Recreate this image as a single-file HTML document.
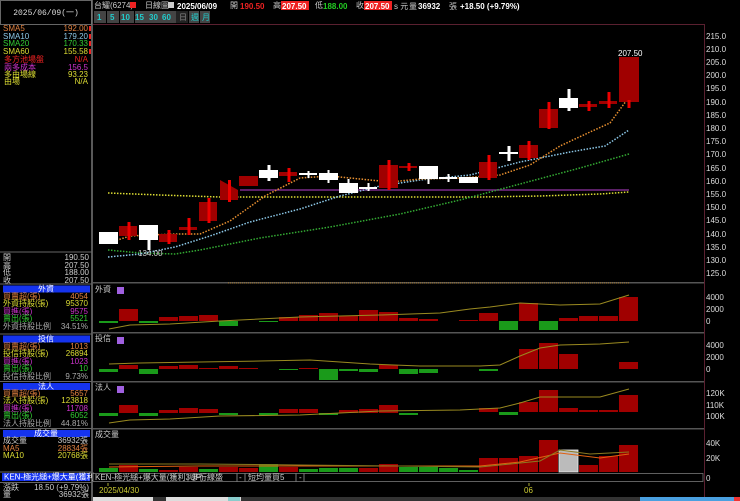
<!DOCTYPE html>
<html><head><meta charset="utf-8"><style>
html,body{margin:0;padding:0;background:#000;width:740px;height:501px;overflow:hidden}
svg{display:block}
text{font-family:"Liberation Sans","Noto Sans CJK TC",sans-serif;font-size:8px}
.m{font-family:"Liberation Mono","Noto Sans CJK TC",monospace;font-size:8px}
</style></head><body>
<svg width="740" height="501" viewBox="0 0 740 501" xmlns="http://www.w3.org/2000/svg">
<rect width="740" height="501" fill="#000"/>
<!-- left panel frame -->
<rect x="0.5" y="0.5" width="91" height="24" fill="#000" stroke="#666"/>
<text x="46" y="15" fill="#ddd" text-anchor="middle" class="m" font-size="7">2025/06/09(一)</text>
<line x1="92" y1="0" x2="92" y2="501" stroke="#777" stroke-width="1.5"/>
<g class="m" font-size="7">
<text x="3" y="31" fill="#e08040">SMA5</text><text x="88" y="31" fill="#e08040" text-anchor="end">192.00</text>
<text x="3" y="39" fill="#8cc8e8">SMA10</text><text x="88" y="39" fill="#8cc8e8" text-anchor="end">179.20</text>
<text x="3" y="46" fill="#3c3">SMA20</text><text x="88" y="46" fill="#3c3" text-anchor="end">170.33</text>
<text x="3" y="54" fill="#dd3">SMA60</text><text x="88" y="54" fill="#dd3" text-anchor="end">155.58</text>
<text x="4" y="62" fill="#e22">多方池場盤</text><text x="88" y="62" fill="#e22" text-anchor="end">N/A</text>
<text x="4" y="70" fill="#c3c">兩多成本</text><text x="88" y="70" fill="#c3c" text-anchor="end">156.5</text>
<text x="4" y="77" fill="#dd3">多由場線</text><text x="88" y="77" fill="#dd3" text-anchor="end">93.23</text>
<text x="4" y="84" fill="#dd3">由場</text><text x="88" y="84" fill="#dd3" text-anchor="end">N/A</text>
</g>
<g fill="#e22"><rect x="89" y="26" width="2" height="5"/><rect x="89" y="34" width="2" height="5"/><rect x="89" y="41" width="2" height="5"/><rect x="89" y="49" width="2" height="5"/></g>
<line x1="0" y1="252" x2="92" y2="252" stroke="#666"/>
<g class="m" font-size="7" fill="#ccc">
<text x="3" y="260">開</text><text x="89" y="260" text-anchor="end">190.50</text>
<text x="3" y="268">高</text><text x="89" y="268" text-anchor="end">207.50</text>
<text x="3" y="275">低</text><text x="89" y="275" text-anchor="end">188.00</text>
<text x="3" y="283">收</text><text x="89" y="283" text-anchor="end">207.50</text>
</g>
<!-- 外資 -->
<line x1="0" y1="284" x2="92" y2="284" stroke="#666"/>
<rect x="3" y="285.5" width="87" height="7" fill="#1533ee"/>
<text x="46" y="291.5" fill="#fff" text-anchor="middle" font-size="7">外資</text>
<g class="m" font-size="7">
<text x="3" y="299" fill="#e08040">買賣超(張)</text><text x="88" y="299" fill="#e08040" text-anchor="end">4054</text>
<text x="3" y="306" fill="#dd3">外資持股(張)</text><text x="88" y="306" fill="#dd3" text-anchor="end">95370</text>
<text x="3" y="314" fill="#c3c">買進(張)</text><text x="88" y="314" fill="#c3c" text-anchor="end">9575</text>
<text x="3" y="321" fill="#3c3">賣出(張)</text><text x="88" y="321" fill="#3c3" text-anchor="end">5521</text>
<text x="3" y="329" fill="#aaa">外資持股比例</text><text x="88" y="329" fill="#aaa" text-anchor="end">34.51%</text>
</g>
<line x1="0" y1="334" x2="92" y2="334" stroke="#666"/>
<rect x="3" y="335.5" width="87" height="7" fill="#1533ee"/>
<text x="46" y="341.5" fill="#fff" text-anchor="middle" font-size="7">投信</text>
<g class="m" font-size="7">
<text x="3" y="349" fill="#e08040">買賣超(張)</text><text x="88" y="349" fill="#e08040" text-anchor="end">1013</text>
<text x="3" y="356" fill="#dd3">投信持股(張)</text><text x="88" y="356" fill="#dd3" text-anchor="end">26894</text>
<text x="3" y="364" fill="#c3c">買進(張)</text><text x="88" y="364" fill="#c3c" text-anchor="end">1023</text>
<text x="3" y="371" fill="#3c3">賣出(張)</text><text x="88" y="371" fill="#3c3" text-anchor="end">10</text>
<text x="3" y="379" fill="#aaa">投信持股比例</text><text x="88" y="379" fill="#aaa" text-anchor="end">9.73%</text>
</g>
<line x1="0" y1="381.5" x2="92" y2="381.5" stroke="#666"/>
<rect x="3" y="383" width="87" height="7" fill="#1533ee"/>
<text x="46" y="389" fill="#fff" text-anchor="middle" font-size="7">法人</text>
<g class="m" font-size="7">
<text x="3" y="396" fill="#e08040">買賣超(張)</text><text x="88" y="396" fill="#e08040" text-anchor="end">5657</text>
<text x="3" y="403" fill="#dd3">法人持股(張)</text><text x="88" y="403" fill="#dd3" text-anchor="end">123818</text>
<text x="3" y="411" fill="#c3c">買進(張)</text><text x="88" y="411" fill="#c3c" text-anchor="end">11708</text>
<text x="3" y="418" fill="#3c3">賣出(張)</text><text x="88" y="418" fill="#3c3" text-anchor="end">6052</text>
<text x="3" y="426" fill="#aaa">法人持股比例</text><text x="88" y="426" fill="#aaa" text-anchor="end">44.81%</text>
</g>
<line x1="0" y1="428.5" x2="92" y2="428.5" stroke="#666"/>
<rect x="3" y="430" width="87" height="7" fill="#1533ee"/>
<text x="46" y="436" fill="#fff" text-anchor="middle" font-size="7">成交量</text>
<g class="m" font-size="7">
<text x="3" y="443" fill="#ccc">成交量</text><text x="88" y="443" fill="#ccc" text-anchor="end">36932張</text>
<text x="3" y="451" fill="#e08040">MA5</text><text x="88" y="451" fill="#e08040" text-anchor="end">28834張</text>
<text x="3" y="458" fill="#dd3">MA10</text><text x="88" y="458" fill="#dd3" text-anchor="end">20768張</text>
</g>
<line x1="0" y1="472" x2="92" y2="472" stroke="#666"/>
<rect x="2" y="473" width="88" height="8" fill="#1533ee"/>
<text x="4" y="479.5" fill="#fff" font-size="6.5">KEN-極光縋+爆大量(獲利3UP)</text>
<line x1="0" y1="482.5" x2="92" y2="482.5" stroke="#666"/>
<g class="m" font-size="7" fill="#ccc">
<text x="3" y="490">漲跌</text><text x="89" y="490" text-anchor="end">18.50 (+9.79%)</text>
<text x="3" y="497">量</text><text x="89" y="497" text-anchor="end">36932張</text>
</g>

<!-- top toolbar -->
<text x="94" y="8" fill="#ccc" font-size="6.5">台耀(6274)</text>
<rect x="130" y="2" width="6" height="6" fill="#e22"/>
<text x="145" y="8" fill="#ccc" font-size="6.5">日線圖</text>
<rect x="168" y="2" width="6" height="6" fill="#ccc"/>
<text x="177" y="9" fill="#fff" font-size="9" font-weight="bold">2025/06/09</text>
<text x="230" y="8" fill="#ccc" font-size="7">開</text>
<text x="240" y="9" fill="#e22" font-size="9" font-weight="bold">190.50</text>
<text x="273" y="8" fill="#ccc" font-size="7">高</text>
<rect x="281" y="1" width="28" height="9" fill="#e22"/>
<text x="282" y="9" fill="#fff" font-size="9" font-weight="bold">207.50</text>
<text x="315" y="8" fill="#ccc" font-size="7">低</text>
<text x="323" y="9" fill="#2c2" font-size="9" font-weight="bold">188.00</text>
<text x="356" y="8" fill="#ccc" font-size="7">收</text>
<rect x="364" y="1" width="28" height="9" fill="#e22"/>
<text x="365" y="9" fill="#fff" font-size="9" font-weight="bold">207.50</text>
<text x="394" y="9" fill="#ccc" font-size="7">s 元</text>
<text x="409" y="9" fill="#ccc" font-size="7">量</text>
<text x="418" y="9" fill="#fff" font-size="9" font-weight="bold">36932</text>
<text x="449" y="9" fill="#ccc" font-size="7">張</text>
<text x="460" y="9" fill="#fff" font-size="9" font-weight="bold">+18.50 (+9.79%)</text>
<g font-size="9" font-weight="bold" fill="#2cc">
<rect x="94" y="11" width="12" height="12" fill="#444"/><text x="97" y="20">1</text>
<rect x="107" y="11" width="12" height="12" fill="#444"/><text x="110" y="20">5</text>
<rect x="120" y="11" width="14" height="12" fill="#444"/><text x="121" y="20">10</text>
<rect x="135" y="11" width="14" height="12" fill="#444"/><text x="135" y="20">15</text>
<rect x="149" y="11" width="14" height="12" fill="#444"/><text x="149" y="20">30</text>
<rect x="162" y="11" width="14" height="12" fill="#444"/><text x="162" y="20">60</text>
<rect x="176" y="11" width="12" height="12" fill="#222"/><text x="179" y="20" fill="#888" font-weight="normal" font-size="6">日</text>
<rect x="189" y="11" width="10" height="12" fill="#444"/><text x="191" y="20" font-weight="normal" font-size="6">週</text>
<rect x="200" y="11" width="10" height="12" fill="#444"/><text x="202" y="20" font-weight="normal" font-size="6">月</text>
</g>

<!-- main chart frame -->
<line x1="93" y1="24.5" x2="705" y2="24.5" stroke="#5a2030"/>
<line x1="704.5" y1="24" x2="704.5" y2="501" stroke="#5a2030"/>
<g fill="#ddd" font-size="8">
<text x="706" y="39">215.0</text><text x="706" y="52">210.0</text><text x="706" y="65">205.0</text><text x="706" y="78">200.0</text><text x="706" y="91">195.0</text><text x="706" y="105">190.0</text><text x="706" y="118">185.0</text><text x="706" y="131">180.0</text><text x="706" y="144">175.0</text><text x="706" y="157">170.0</text><text x="706" y="171">165.0</text><text x="706" y="184">160.0</text><text x="706" y="197">155.0</text><text x="706" y="210">150.0</text><text x="706" y="223">145.0</text><text x="706" y="237">140.0</text><text x="706" y="250">135.0</text><text x="706" y="263">130.0</text><text x="706" y="276">125.0</text>
</g>
<!-- MA lines -->
<line x1="240" y1="190" x2="629" y2="190" stroke="#7a2a8a" stroke-width="1.5"/>
<polyline fill="none" stroke="#dd3" stroke-width="1.5" stroke-dasharray="1.5 1.5" points="108,193 160,195 220,197 300,197 400,197 480,197 540,196 600,194 629,192"/>
<polyline fill="none" stroke="#3a3" stroke-width="1.5" stroke-dasharray="1.5 1.5" points="108,250 140,253 175,254 200,250 260,238 330,227 400,214 460,200 520,184 580,168 629,154"/>
<polyline fill="none" stroke="#8cc8e8" stroke-width="1.5" stroke-dasharray="1.5 1.5" points="108,257 140,254 175,247 210,236 250,222 300,209 340,196 380,186 420,180 470,175 520,162 570,152 605,146 629,130"/>
<polyline fill="none" stroke="#e89030" stroke-width="1.5" stroke-dasharray="1.5 1.5" points="108,243 130,236 150,235 175,234 200,234 230,221 265,196 300,178 330,176 360,179 390,182 420,179 460,178 500,175 530,165 560,146 590,132 610,123 629,97"/>
<!-- candles -->
<g fill="#a00000">
<rect x="119" y="226" width="18" height="10"/><rect x="127.5" y="222" width="3" height="18" fill="#e00"/>
<rect x="159" y="234" width="18" height="8"/><rect x="167.5" y="230" width="3" height="14" fill="#e00"/>
<rect x="179" y="227" width="18" height="3"/><rect x="187.5" y="218" width="3" height="17" fill="#e00"/>
<rect x="199" y="202" width="18" height="19"/><rect x="207.5" y="198" width="3" height="25" fill="#e00"/>
<path d="M220,180 L238,190 L238,200 L220,200 Z"/><rect x="228" y="180" width="3" height="22" fill="#e00"/>
<rect x="239" y="176" width="19" height="10"/>
<rect x="279" y="172" width="18" height="4"/><rect x="287.5" y="168" width="3" height="14" fill="#e00"/>
<rect x="379" y="165" width="19" height="23"/><rect x="387.5" y="160" width="3" height="30" fill="#e00"/>
<rect x="399" y="166" width="18" height="2"/><rect x="407.5" y="163" width="3" height="8" fill="#e00"/>
<rect x="479" y="162" width="18" height="16"/><rect x="487.5" y="155" width="3" height="25" fill="#e00"/>
<rect x="519" y="145" width="19" height="13"/><rect x="527.5" y="141" width="3" height="19" fill="#e00"/>
<rect x="539" y="109" width="19" height="19"/><rect x="547.5" y="102" width="3" height="27" fill="#e00"/>
<rect x="579" y="104" width="18" height="3"/><rect x="587.5" y="101" width="3" height="10" fill="#e00"/>
<rect x="599" y="101" width="18" height="3"/><rect x="607.5" y="92" width="3" height="16" fill="#e00"/>
<rect x="619" y="57" width="20" height="45"/><rect x="627.5" y="100" width="3" height="8" fill="#e00"/>
</g>
<g fill="#fff">
<rect x="99" y="232" width="19" height="12"/>
<rect x="139" y="225" width="19" height="15"/><rect x="147.5" y="240" width="3" height="10"/>
<rect x="259" y="170" width="19" height="8"/><rect x="267.5" y="165" width="3" height="16"/>
<rect x="299" y="173" width="18" height="2"/><rect x="307.5" y="171" width="2" height="7"/>
<rect x="319" y="173" width="19" height="7"/><rect x="327.5" y="170" width="2" height="13"/>
<rect x="339" y="183" width="19" height="10"/><rect x="347.5" y="179" width="2" height="5"/>
<rect x="359" y="187" width="18" height="2"/><rect x="367.5" y="183" width="2" height="8"/>
<rect x="419" y="166" width="19" height="13"/><rect x="427.5" y="176" width="2" height="8"/>
<rect x="439" y="177" width="18" height="2"/><rect x="447.5" y="174" width="2" height="8"/>
<rect x="459" y="177" width="19" height="6"/>
<rect x="499" y="152" width="19" height="2"/><rect x="507.5" y="146" width="3" height="15"/>
<rect x="559" y="98" width="19" height="10"/><rect x="567.5" y="89" width="3" height="22"/>
</g>
<text x="618" y="56" fill="#fff" font-size="8">207.50</text>
<text x="138" y="256" fill="#ccc" font-size="7">134.00</text>
<!-- divider -->
<rect x="93" y="282" width="611" height="1.5" fill="#555"/>
<line x1="228" y1="283" x2="629" y2="283" stroke="#b08030" stroke-width="1" stroke-dasharray="1 1"/>

<!-- foreign panel -->
<text x="95" y="292" fill="#ccc" font-size="7">外資</text>
<rect x="117" y="287" width="7" height="7" fill="#a060e0"/>
<g fill="#a00000">
<rect x="119" y="309" width="19" height="12"/><rect x="159" y="317" width="19" height="4"/><rect x="179" y="316" width="19" height="5"/><rect x="199" y="315" width="19" height="6"/>
<rect x="279" y="317" width="19" height="4"/><rect x="299" y="315" width="19" height="6"/><rect x="319" y="313" width="19" height="8"/><rect x="339" y="316" width="19" height="5"/><rect x="359" y="310" width="19" height="11"/><rect x="379" y="312" width="19" height="9"/><rect x="399" y="318" width="19" height="3"/><rect x="419" y="319" width="19" height="2"/><rect x="459" y="320" width="19" height="1"/>
<rect x="479" y="313" width="19" height="8"/><rect x="519" y="303" width="19" height="18"/><rect x="559" y="318" width="19" height="3"/><rect x="579" y="316" width="19" height="5"/><rect x="599" y="316" width="19" height="5"/><rect x="619" y="297" width="19" height="24"/>
</g>
<g fill="#1a9a1a">
<rect x="99" y="321" width="19" height="2"/><rect x="139" y="321" width="19" height="2"/><rect x="219" y="321" width="19" height="5"/><rect x="259" y="321" width="19" height="1"/>
<rect x="499" y="321" width="19" height="9"/><rect x="539" y="321" width="19" height="9"/>
</g>
<polyline fill="none" stroke="#9a8a20" points="109,329 130,325 170,324 220,321 300,317 380,315 440,313 470,309 490,307 520,303 560,305 600,304 629,295"/>
<g fill="#ddd" font-size="8"><text x="706" y="300">4000</text><text x="706" y="312">2000</text><text x="706" y="324">0</text></g>
<rect x="93" y="332" width="611" height="1.5" fill="#555"/>

<!-- trust panel -->
<text x="95" y="341" fill="#ccc" font-size="7">投信</text>
<rect x="117" y="337" width="7" height="7" fill="#a060e0"/>
<g fill="#a00000">
<rect x="119" y="365" width="19" height="4"/><rect x="159" y="366" width="19" height="3"/><rect x="179" y="365" width="19" height="4"/><rect x="199" y="368" width="19" height="1"/><rect x="219" y="366" width="19" height="3"/><rect x="239" y="368" width="19" height="1"/><rect x="299" y="368" width="19" height="1"/><rect x="379" y="365" width="19" height="4"/>
<rect x="519" y="349" width="19" height="20"/><rect x="539" y="343" width="19" height="26"/><rect x="559" y="354" width="19" height="15"/><rect x="619" y="362" width="19" height="7"/>
</g>
<g fill="#1a9a1a">
<rect x="99" y="369" width="19" height="3"/><rect x="139" y="369" width="19" height="5"/><rect x="279" y="369" width="19" height="1"/><rect x="319" y="369" width="19" height="11"/><rect x="339" y="369" width="19" height="2"/><rect x="359" y="369" width="19" height="3"/><rect x="399" y="369" width="19" height="5"/><rect x="419" y="369" width="19" height="4"/><rect x="479" y="369" width="19" height="2"/>
</g>
<polyline fill="none" stroke="#9a8a20" points="109,364 140,363 200,362 260,361 310,360 340,362 370,364 420,366 480,366 500,365 520,356 540,348 560,345 600,344 629,342"/>
<g fill="#ddd" font-size="8"><text x="706" y="348">4000</text><text x="706" y="360">2000</text><text x="706" y="372">0</text></g>
<rect x="93" y="381" width="611" height="1.5" fill="#555"/>

<!-- institutional panel -->
<text x="95" y="390" fill="#ccc" font-size="7">法人</text>
<rect x="117" y="386" width="7" height="7" fill="#a060e0"/>
<g fill="#a00000">
<rect x="119" y="405" width="19" height="8"/><rect x="159" y="410" width="19" height="3"/><rect x="179" y="408" width="19" height="5"/><rect x="199" y="409" width="19" height="4"/><rect x="279" y="409" width="19" height="4"/><rect x="299" y="409" width="19" height="4"/><rect x="339" y="410" width="19" height="3"/><rect x="359" y="409" width="19" height="4"/><rect x="379" y="405" width="19" height="8"/>
<rect x="479" y="408" width="19" height="4"/><rect x="519" y="402" width="19" height="10"/><rect x="539" y="390" width="19" height="22"/><rect x="559" y="408" width="19" height="4"/><rect x="579" y="410" width="19" height="2"/><rect x="599" y="410" width="19" height="2"/><rect x="619" y="395" width="19" height="17"/>
</g>
<g fill="#1a9a1a">
<rect x="99" y="413" width="19" height="3"/><rect x="139" y="413" width="19" height="3"/><rect x="219" y="413" width="19" height="2"/><rect x="259" y="413" width="19" height="2"/><rect x="319" y="413" width="19" height="2"/><rect x="399" y="413" width="19" height="2"/><rect x="499" y="412" width="19" height="3"/>
</g>
<polyline fill="none" stroke="#9a8a20" points="109,423 130,420 170,419 220,416 300,415 380,411 460,410 500,408 520,403 540,397 560,397 600,397 629,389"/>
<g fill="#ddd" font-size="8"><text x="706" y="396">120K</text><text x="706" y="408">110K</text><text x="706" y="419">100K</text></g>
<rect x="93" y="428" width="611" height="1.5" fill="#555"/>

<!-- volume panel -->
<text x="95" y="437" fill="#ccc" font-size="7">成交量</text>
<g fill="#a00000">
<rect x="119" y="465" width="19" height="7"/><rect x="159" y="470" width="19" height="2"/><rect x="179" y="467" width="19" height="5"/><rect x="219" y="467" width="19" height="5"/><rect x="239" y="468" width="19" height="4"/>
<rect x="279" y="467" width="19" height="5"/><rect x="359" y="468" width="19" height="4"/><rect x="379" y="464" width="19" height="8"/>
<rect x="479" y="458" width="19" height="14"/><rect x="499" y="458" width="19" height="14"/><rect x="519" y="456" width="19" height="16"/><rect x="539" y="440" width="19" height="32"/><rect x="579" y="465" width="19" height="7"/><rect x="599" y="456" width="19" height="16"/><rect x="619" y="445" width="19" height="27"/>
</g>
<g fill="#1a9a1a">
<rect x="99" y="468" width="19" height="4"/><rect x="139" y="469" width="19" height="3"/><rect x="199" y="469" width="19" height="3"/><rect x="259" y="464" width="19" height="8"/><rect x="299" y="469" width="19" height="3"/><rect x="319" y="468" width="19" height="4"/><rect x="339" y="468" width="19" height="4"/><rect x="399" y="467" width="19" height="5"/><rect x="419" y="467" width="19" height="5"/><rect x="439" y="468" width="19" height="4"/><rect x="459" y="470" width="19" height="2"/>
</g>
<rect x="559" y="450" width="19" height="22" fill="#bbb" stroke="#eee" stroke-width="0.8"/>
<polyline fill="none" stroke="#e06010" points="109,467 200,466 300,466 400,466 480,466 520,462 560,453 600,458 629,454"/>
<polyline fill="none" stroke="#8a7a20" points="109,464 200,464 300,465 400,466 480,467 540,461 560,450 590,454 629,452"/>
<g fill="#ddd" font-size="8"><text x="706" y="446">40K</text><text x="706" y="461">20K</text><text x="706" y="481">0</text></g>
<!-- indicator bar -->
<rect x="93" y="473.5" width="610" height="8" fill="#000" stroke="#777" stroke-width="0.8"/>
<text x="95" y="480" fill="#ccc" font-size="6.5">KEN-極光縋+爆大量(獲利3UP)</text>
<line x1="188" y1="473" x2="188" y2="482" stroke="#777"/>
<text x="191" y="480" fill="#ccc" font-size="6.5">參行線盛</text>
<line x1="237" y1="473" x2="237" y2="482" stroke="#777"/><text x="239" y="480" fill="#ccc" font-size="6.5">-</text>
<line x1="245" y1="473" x2="245" y2="482" stroke="#777"/><text x="248" y="480" fill="#ccc" font-size="6.5">短均量買5</text>
<line x1="296" y1="473" x2="296" y2="482" stroke="#777"/><text x="299" y="480" fill="#ccc" font-size="6.5">-</text>
<line x1="304" y1="473" x2="304" y2="482" stroke="#777"/>
<line x1="108" y1="483" x2="108" y2="486" stroke="#aa3"/>
<text x="99" y="493" fill="#cc3" font-size="8">2025/04/30</text>
<line x1="529" y1="483" x2="529" y2="486" stroke="#aa3"/>
<text x="524" y="493" fill="#cc3" font-size="7">06</text>
<!-- bottom strip -->
<rect x="93" y="497" width="611" height="4" fill="#333"/>
<rect x="93" y="497" width="60" height="4" fill="#ddd"/>
<rect x="166" y="497" width="75" height="4" fill="#ddd"/>
<rect x="228" y="497" width="12" height="4" fill="#8cc"/>
<rect x="640" y="497" width="100" height="4" fill="#4aa0e0"/>
<rect x="734" y="497" width="6" height="4" fill="#e33"/>
</svg>
</body></html>
